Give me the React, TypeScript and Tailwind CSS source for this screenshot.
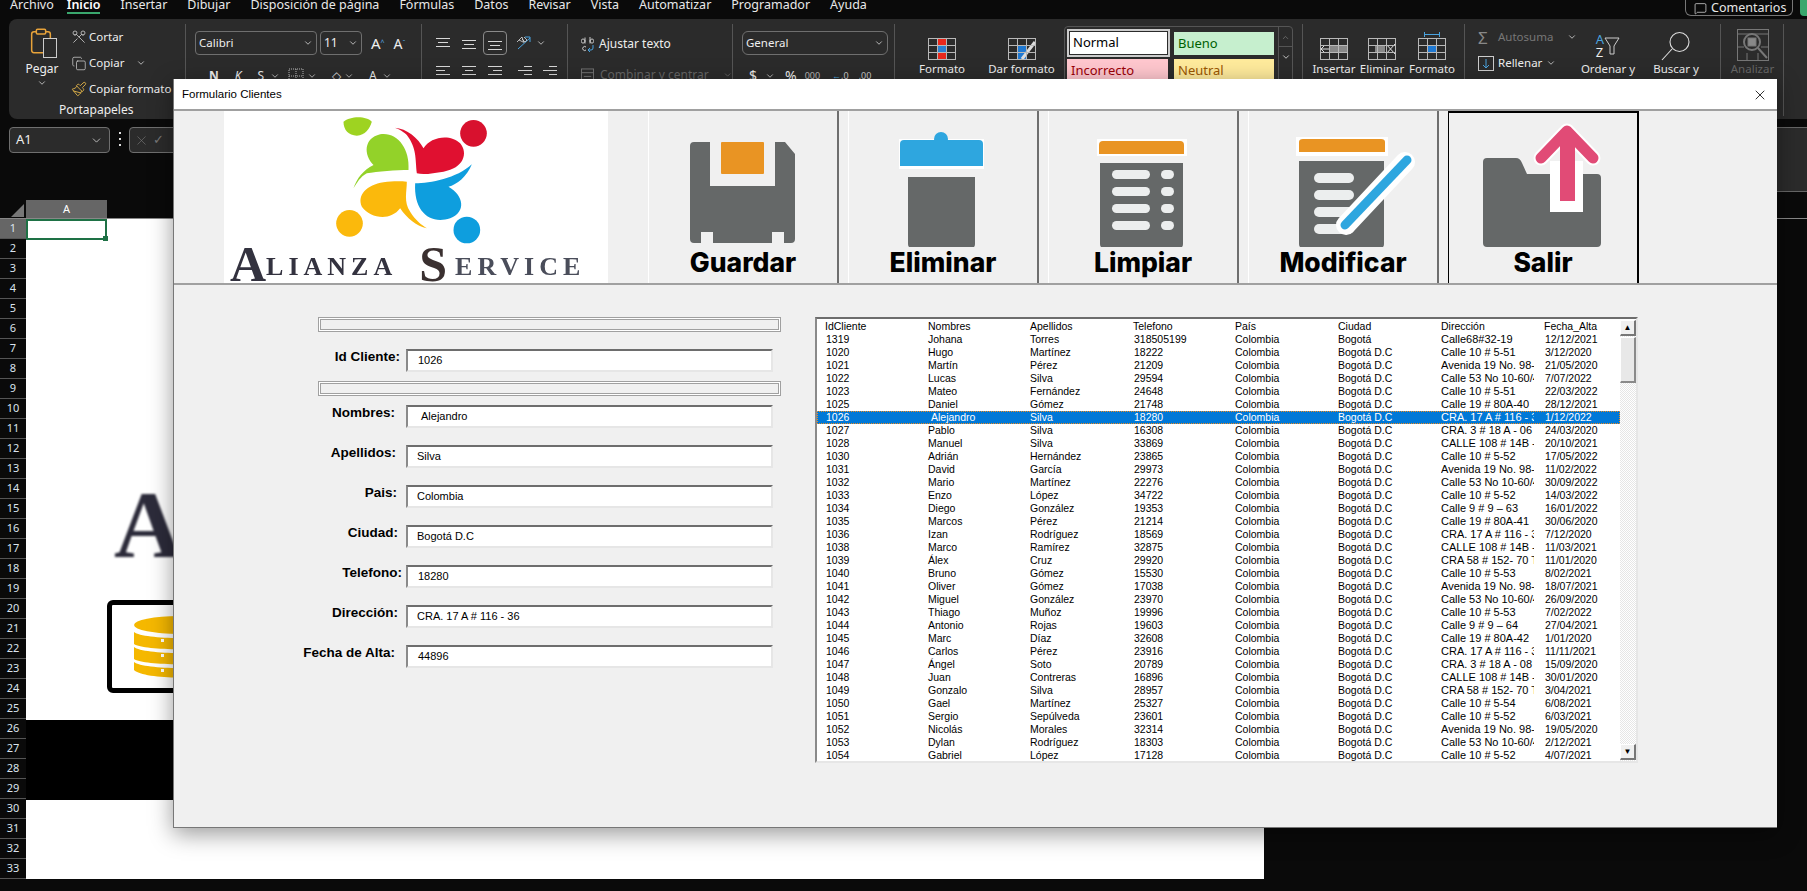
import { ChevronDown, Clipboard, Copy, MessageSquare, Paintbrush, Scissors, X } from 'lucide-react';

const menu = ['Archivo', 'Inicio', 'Insertar', 'Dibujar', 'Disposición de página', 'Fórmulas', 'Datos', 'Revisar', 'Vista', 'Automatizar', 'Programador', 'Ayuda'];

const addr = {
  a51: 'Calle 10 # 5-51',
  a52: 'Calle 10 # 5-52',
  a53: 'Calle 10 # 5-53',
  av: 'Avenida 19 No. 98-03',
  c53: 'Calle 53 No 10-60/46',
  cra17: 'CRA. 17 A # 116 - 36',
  c108: 'CALLE 108 # 14B - 10',
  cra58: 'CRA 58 # 152- 70 Torre',
};

const clients = [
  ['1319', 'Johana', 'Torres', '318505199', 'Bogotá', 'Calle68#32-19', '12/12/2021'],
  ['1020', 'Hugo', 'Martínez', '18222', 'Bogotá D.C', addr.a51, '3/12/2020'],
  ['1021', 'Martín', 'Pérez', '21209', 'Bogotá D.C', addr.av, '21/05/2020'],
  ['1022', 'Lucas', 'Silva', '29594', 'Bogotá D.C', addr.c53, '7/07/2022'],
  ['1023', 'Mateo', 'Fernández', '24648', 'Bogotá D.C', addr.a51, '22/03/2022'],
  ['1025', 'Daniel', 'Gómez', '21748', 'Bogotá D.C', 'Calle 19 # 80A-40', '28/12/2021'],
  ['1026', 'Alejandro', 'Silva', '18280', 'Bogotá D.C', addr.cra17, '1/12/2022'],
  ['1027', 'Pablo', 'Silva', '16308', 'Bogotá D.C', 'CRA. 3 # 18 A - 06', '24/03/2020'],
  ['1028', 'Manuel', 'Silva', '33869', 'Bogotá D.C', addr.c108, '20/10/2021'],
  ['1030', 'Adrián', 'Hernández', '23865', 'Bogotá D.C', addr.a52, '17/05/2022'],
  ['1031', 'David', 'García', '29973', 'Bogotá D.C', addr.av, '11/02/2022'],
  ['1032', 'Mario', 'Martínez', '22276', 'Bogotá D.C', addr.c53, '30/09/2022'],
  ['1033', 'Enzo', 'López', '34722', 'Bogotá D.C', addr.a52, '14/03/2022'],
  ['1034', 'Diego', 'González', '19353', 'Bogotá D.C', 'Calle 9 # 9 – 63', '16/01/2022'],
  ['1035', 'Marcos', 'Pérez', '21214', 'Bogotá D.C', 'Calle 19 # 80A-41', '30/06/2020'],
  ['1036', 'Izan', 'Rodríguez', '18569', 'Bogotá D.C', addr.cra17, '7/12/2020'],
  ['1038', 'Marco', 'Ramírez', '32875', 'Bogotá D.C', addr.c108, '11/03/2021'],
  ['1039', 'Álex', 'Cruz', '29920', 'Bogotá D.C', addr.cra58, '11/01/2020'],
  ['1040', 'Bruno', 'Gómez', '15530', 'Bogotá D.C', addr.a53, '8/02/2021'],
  ['1041', 'Oliver', 'Gómez', '17038', 'Bogotá D.C', addr.av, '18/07/2021'],
  ['1042', 'Miguel', 'González', '23970', 'Bogotá D.C', addr.c53, '26/09/2020'],
  ['1043', 'Thiago', 'Muñoz', '19996', 'Bogotá D.C', addr.a53, '7/02/2022'],
  ['1044', 'Antonio', 'Rojas', '19603', 'Bogotá D.C', 'Calle 9 # 9 – 64', '27/04/2021'],
  ['1045', 'Marc', 'Díaz', '32608', 'Bogotá D.C', 'Calle 19 # 80A-42', '1/01/2020'],
  ['1046', 'Carlos', 'Pérez', '23916', 'Bogotá D.C', addr.cra17, '11/11/2021'],
  ['1047', 'Ángel', 'Soto', '20789', 'Bogotá D.C', 'CRA. 3 # 18 A - 08', '15/09/2020'],
  ['1048', 'Juan', 'Contreras', '16896', 'Bogotá D.C', addr.c108, '30/01/2020'],
  ['1049', 'Gonzalo', 'Silva', '28957', 'Bogotá D.C', addr.cra58, '3/04/2021'],
  ['1050', 'Gael', 'Martínez', '25327', 'Bogotá D.C', 'Calle 10 # 5-54', '6/08/2021'],
  ['1051', 'Sergio', 'Sepúlveda', '23601', 'Bogotá D.C', addr.a52, '6/03/2021'],
  ['1052', 'Nicolás', 'Morales', '32314', 'Bogotá D.C', addr.av, '19/05/2020'],
  ['1053', 'Dylan', 'Rodríguez', '18303', 'Bogotá D.C', addr.c53, '2/12/2021'],
  ['1054', 'Gabriel', 'López', '17128', 'Bogotá D.C', addr.a52, '4/07/2021'],
];

const fields = [
  { label: 'Nombres:', value: 'Alejandro', labelPad: 'pr-[11px]', valuePad: 'pl-[13px]' },
  { label: 'Apellidos:', value: 'Silva', labelPad: 'pr-[10px]', valuePad: 'pl-[9px]' },
  { label: 'Pais:', value: 'Colombia', labelPad: 'pr-[9px]', valuePad: 'pl-[9px]' },
  { label: 'Ciudad:', value: 'Bogotá D.C', labelPad: 'pr-[8px]', valuePad: 'pl-[9px]' },
  { label: 'Telefono:', value: '18280', labelPad: 'pr-[4px]', valuePad: 'pl-[10px]' },
  { label: 'Dirección:', value: 'CRA. 17 A # 116 - 36', labelPad: 'pr-[8px]', valuePad: 'pl-[9px]' },
  { label: 'Fecha de Alta:', value: '44896', labelPad: 'pr-[11px]', valuePad: 'pl-[10px]' },
];

function Chev({ className = '' }: { className?: string }) {
  return <ChevronDown size={10} strokeWidth={2} className={`text-[#d0d0d0] ${className}`} />;
}

function Lines({ rows, dim = false }: { rows: [number, number, number][]; dim?: boolean }) {
  return (
    <svg width="16" height="14" viewBox="0 0 16 14" stroke={dim ? '#777' : '#d8d8d8'} strokeWidth="1">
      {rows.map(([x1, x2, y], i) => (
        <line key={i} x1={x1} x2={x2} y1={y + 0.5} y2={y + 0.5} />
      ))}
    </svg>
  );
}

function CellGrid({ children }: { children?: React.ReactNode }) {
  return (
    <svg width="30" height="24" viewBox="0 0 30 24" fill="none">
      {children}
      <g stroke="#b8b8b8" strokeWidth="1">
        <rect x="1.5" y="1.5" width="27" height="21" />
        <path d="M10.5 1.5v21M19.5 1.5v21M1.5 8.5h27M1.5 15.5h27" />
      </g>
    </svg>
  );
}

function BigTool({ icon, label, width, dim = false }: { icon: React.ReactNode; label: string; width: string; dim?: boolean }) {
  return (
    <div className={`flex flex-col items-center pt-[2px] ${width}`}>
      <div className="flex h-[35px] items-end justify-center">{icon}</div>
      <div className={`whitespace-nowrap text-[11.5px] leading-[16px] ${dim ? 'text-[#666]' : 'text-[#eee]'}`}>{label}</div>
    </div>
  );
}

function Ribbon() {
  return (
    <div className="ml-[9px] flex h-[100px] rounded-l-lg bg-[#2b2b2b] font-['Noto_Sans',sans-serif] text-[12px] text-[#eee]">
      {/* Portapapeles */}
      <div className="mt-[5px] mb-[3px] flex w-[177px] flex-col border-r border-[#555]">
        <div className="flex flex-1">
          <div className="flex w-[60px] flex-col items-center pl-[6px] pt-[3px]">
            <div className="relative h-[31px] w-[30px]">
              <Clipboard size={28} strokeWidth={1.3} className="text-[#e8a33a]" />
              <div className="absolute right-0 bottom-0 h-[20px] w-[14px] border border-[#ccc] bg-[#2b2b2b]" />
            </div>
            <div className="mt-[3px] leading-[16px]">Pegar</div>
            <Chev className="mt-[1px]" />
          </div>
          <div className="flex flex-col text-[11.5px] leading-[16px]">
            <div className="flex h-[26px] items-center">
              <Scissors size={16} strokeWidth={1.2} className="w-[20px] rotate-90 text-[#cfcfcf]" />
              Cortar
            </div>
            <div className="flex h-[26px] items-center">
              <Copy size={15} strokeWidth={1.2} className="w-[20px] text-[#cfcfcf]" />
              Copiar
              <Chev className="ml-[12px]" />
            </div>
            <div className="flex h-[26px] items-center whitespace-nowrap">
              <Paintbrush size={16} strokeWidth={1.3} className="w-[20px] text-[#e8b84a]" />
              Copiar formato
            </div>
          </div>
        </div>
        <div className="pb-[2px] pl-[50px] leading-[16px]">Portapapeles</div>
      </div>

      {/* Fuente */}
      <div className="mt-[5px] mb-[3px] w-[236px] border-r border-[#555] pl-[9px] pt-[7px]">
        <div className="flex items-center">
          <div className="flex h-[24px] w-[122px] items-center justify-between rounded border border-[#6f6f6f] px-[3px] text-[11.5px]">
            Calibri <Chev />
          </div>
          <div className="ml-[3px] flex h-[24px] w-[42px] items-center justify-between rounded border border-[#6f6f6f] px-[3px]">
            11 <Chev />
          </div>
          <span className="ml-[9px] text-[15px]">A<sup className="text-[7px] text-[#5ab0e8]">^</sup></span>
          <span className="ml-[9px] text-[14px]">A<sup className="text-[7px] text-[#5ab0e8]">ˇ</sup></span>
        </div>
        <div className="mt-[12px] flex items-center pl-[14px] font-bold">
          <span>N</span>
          <span className="ml-[16px] font-normal italic">K</span>
          <span className="ml-[16px] font-normal underline">S</span>
          <Chev className="ml-[6px]" />
          <svg width="16" height="16" className="ml-[8px]" viewBox="0 0 16 16" fill="none" stroke="#bbb" strokeDasharray="1 1"><rect x="1" y="1" width="14" height="14" /><path d="M8 1v14M1 8h14" /></svg>
          <Chev className="ml-[3px]" />
          <span className="ml-[15px] text-[#ddd] font-normal">◇</span>
          <Chev className="ml-[3px]" />
          <span className="ml-[15px] font-normal">A</span>
          <Chev className="ml-[5px]" />
        </div>
      </div>

      {/* Alineacion */}
      <div className="mt-[5px] mb-[3px] w-[146px] border-r border-[#555] pl-[13px] pt-[7px]">
        <div className="flex h-[24px] items-center">
          <div className="w-[26px]"><Lines rows={[[1, 15, 2], [3, 13, 6], [1, 15, 10]]} /></div>
          <div className="w-[22px]"><Lines rows={[[1, 15, 4], [3, 13, 8], [1, 15, 12]]} /></div>
          <div className="flex h-[24px] w-[24px] items-center justify-center rounded border border-[#8a8a8a]"><Lines rows={[[1, 15, 5], [3, 13, 9], [1, 15, 13]]} /></div>
          <div className="ml-[8px] flex items-center gap-[2px]">
            <svg width="18" height="18" viewBox="0 0 18 18" fill="none"><path d="M3 15 15 4M10 3h5v5" stroke="#4aa3df" /><path d="m2 8 5-5 2 6M4 6l4 2M9 3l3 3-2 2-3-3" stroke="#ddd" strokeWidth="0.8" /></svg>
            <Chev className="ml-[1px]" />
          </div>
        </div>
        <div className="mt-[9px] flex items-center">
          <div className="w-[26px]"><Lines rows={[[1, 15, 2], [1, 10, 6], [1, 15, 10]]} /></div>
          <div className="w-[26px]"><Lines rows={[[1, 15, 2], [4, 12, 6], [1, 15, 10]]} /></div>
          <div className="w-[30px]"><Lines rows={[[1, 15, 2], [6, 15, 6], [1, 15, 10]]} /></div>
          <div className="w-[25px]"><Lines rows={[[7, 15, 2], [1, 15, 6], [7, 15, 10]]} /></div>
          <div><Lines rows={[[7, 15, 2], [1, 15, 6], [7, 15, 10]]} /></div>
        </div>
      </div>

      {/* Ajustar texto */}
      <div className="mt-[5px] mb-[3px] w-[165px] border-r border-[#555] pl-[13px] pt-[10px]">
        <div className="flex h-[20px] items-center gap-[5px]">
          <svg width="13" height="16" viewBox="0 0 13 16" fill="none">
            <path d="M4 1.5v6M4 5a2 2 0 1 0 0 .1M9 1v6.5M9 5a2 2 0 1 1 0 .1M5 11a2 2 0 1 0 0 3" stroke="#ddd" strokeWidth="0.9" />
            <path d="M12 9v3a2 2 0 0 1-2 2H7m2-2-2 2 2 2" stroke="#4aa3df" />
          </svg>
          Ajustar texto
        </div>
        <div className="mt-[12px] flex items-center gap-[6px] whitespace-nowrap text-[#666]">
          <svg width="14" height="14" viewBox="0 0 14 14" fill="none" stroke="#777"><rect x="0.5" y="0.5" width="13" height="13" /><path d="M0.5 4.5h13M3 8.5h8" /></svg>
          Combinar y centrar
          <Chev className="ml-[8px] opacity-40" />
        </div>
      </div>

      {/* Numero */}
      <div className="mt-[5px] mb-[3px] w-[162px] border-r border-[#555] pl-[9px] pt-[7px]">
        <div className="flex h-[24px] w-[146px] items-center justify-between rounded-md border border-[#6f6f6f] px-[3px] text-[11.5px]">
          General <Chev />
        </div>
        <div className="mt-[10px] flex items-center pl-[7px] text-[11px]">
          <span className="text-[14px]">$</span>
          <Chev className="ml-[8px]" />
          <span className="ml-[10px] text-[14px]">%</span>
          <span className="ml-[8px] text-[9px] text-[#bbb]">000</span>
          <span className="ml-[12px] text-[9px] text-[#4aa3df]">←<span className="text-[#ccc]">,0</span></span>
          <span className="ml-[10px] text-[9px] text-[#ccc]">,00</span>
        </div>
      </div>

      {/* Estilos */}
      <div className="mt-[5px] mb-[3px] flex w-[408px] border-r border-[#555]">
        <BigTool
          width="w-[94px]"
          label="Formato"
          icon={
            <CellGrid>
              <rect x="10" y="1" width="10" height="7" fill="#e8281c" />
              <rect x="10" y="8" width="9" height="7" fill="#2a7fd0" />
              <rect x="10" y="15" width="10" height="8" fill="#e8281c" />
            </CellGrid>
          }
        />
        <BigTool
          width="w-[65px]"
          label="Dar formato"
          icon={
            <CellGrid>
              <rect x="10" y="8" width="10" height="14" fill="#1f78d1" />
              <path d="M28 5 15 22" stroke="#ddd" strokeWidth="3" />
            </CellGrid>
          }
        />
        <div className="ml-[10px] mt-[2px] flex h-[70px] w-[229px] rounded-t border border-[#555]">
          <div className="grid h-[58px] flex-1 grid-cols-[107px_100px] content-start gap-y-[2px] pl-[2px] pt-[2px] text-[13px]">
            <div className="flex h-[28px] w-[103px] items-center border-2 border-[#ccc] bg-white pl-[4px] text-black outline outline-[#2b2b2b] -outline-offset-[3px]">Normal</div>
            <div className="mt-[3px] flex h-[23px] items-center bg-[#c6efce] pl-[4px] text-[#006100]">Bueno</div>
            <div className="flex h-[23px] w-[101px] items-center bg-[#ffc7ce] pl-[4px] text-[#9c0006]">Incorrecto</div>
            <div className="flex h-[23px] items-center bg-[#ffeb9c] pl-[4px] text-[#9c5700]">Neutral</div>
          </div>
          <div className="flex w-[14px] flex-col items-center border-l border-[#555] pt-[6px]">
            <ChevronDown size={9} className="rotate-180 text-[#777]" />
            <div className="mt-[4px] h-px w-full bg-[#555]" />
            <ChevronDown size={10} className="mt-[5px] text-[#ddd]" />
          </div>
        </div>
      </div>

      {/* Celdas */}
      <div className="mt-[5px] mb-[3px] flex w-[162px] border-r border-[#555] pl-[7px]">
        <BigTool
          width="w-[48px]"
          label="Insertar"
          icon={
            <CellGrid>
              <rect x="10" y="8" width="18" height="8" fill="#888" />
              <path d="M10 12H2M5 9l-3 3 3 3" stroke="#ddd" />
            </CellGrid>
          }
        />
        <BigTool
          width="w-[48px]"
          label="Eliminar"
          icon={
            <CellGrid>
              <rect x="8" y="8" width="10" height="8" fill="#888" />
              <path d="m19 7 9 10m0-10-9 10" stroke="#ddd" />
            </CellGrid>
          }
        />
        <BigTool
          width="w-[52px]"
          label="Formato"
          icon={
            <div className="flex flex-col items-center">
              <svg width="30" height="5" viewBox="0 0 30 5" stroke="#4aa3df"><path d="M7 2.5h16M7.5 0v5M22.5 0v5" /></svg>
              <CellGrid>
                <rect x="10" y="8" width="10" height="8" fill="#1f78d1" />
              </CellGrid>
            </div>
          }
        />
      </div>

      {/* Edicion */}
      <div className="mt-[5px] mb-[3px] flex w-[256px] border-r border-[#555] pl-[13px] text-[11.5px]">
        <div className="flex w-[100px] flex-col pt-[1px]">
          <div className="flex h-[24px] items-center gap-[6px] text-[#777]">
            <span className="w-[14px] text-[17px] leading-none text-[#888]">Σ</span>
            Autosuma
            <Chev className="ml-[8px]" />
          </div>
          <div className="mt-[2px] flex h-[24px] items-center gap-[4px]">
            <svg width="16" height="16" viewBox="0 0 16 16" fill="none"><rect x="0.5" y="1.5" width="15" height="14" stroke="#ccc" /><path d="M8 4v9M5 10l3 3 3-3" stroke="#4aa3df" /></svg>
            Rellenar
            <Chev />
          </div>
        </div>
        <BigTool
          width="w-[60px]"
          label="Ordenar y"
          icon={
            <div className="flex h-[30px] items-center">
              <span className="text-[13px] leading-[13px]"><span className="text-[#4aa3df]">A</span><br />Z</span>
              <svg width="16" height="20" viewBox="0 0 16 20" fill="none" stroke="#ccc"><path d="M1 2h14L10 10v8H6v-8Z" /></svg>
            </div>
          }
        />
        <BigTool
          width="w-[76px]"
          label="Buscar y"
          icon={
            <svg width="30" height="30" viewBox="0 0 30 30" fill="none" stroke="#ddd" strokeWidth="1.1">
              <circle cx="18.5" cy="11" r="9.5" />
              <path d="M11 18 1 29" />
            </svg>
          }
        />
      </div>

      {/* Analizar */}
      <div className="mt-[5px] mb-[3px] w-[63px] border-r border-[#555]">
        <BigTool
          width="w-[63px]"
          label="Analizar"
          dim
          icon={
            <svg width="32" height="32" viewBox="0 0 32 32" fill="none" stroke="#777">
              <rect x="0.5" y="0.5" width="31" height="31" />
              <path d="M1 5h30M1 18h6M24 18h7M10 24v7M21 24v7" />
              <circle cx="15" cy="13" r="8" strokeWidth="2" />
              <path d="m21 19 9 10" strokeWidth="2" />
              <rect x="11" y="9" width="8" height="8" fill="#888" />
            </svg>
          }
        />
      </div>
    </div>
  );
}

function Sheet() {
  return (
    <div className="flex font-['Noto_Sans',sans-serif]">
      <div className="w-[26px]">
        {Array.from({ length: 33 }, (_, i) => (
          <div key={i} className={`flex h-[20px] items-center justify-center border-b border-[#555] text-[11px] text-[#dbe4ee] ${i === 0 ? 'bg-[#666]' : 'bg-[#0a0a0a]'}`}>
            {i + 1}
          </div>
        ))}
      </div>
      <div className="flex h-[660px] w-[1238px] flex-col bg-white">
        <div className="relative h-[21px] w-[81px] border-2 border-[#1e7145]">
          <div className="absolute -right-[3px] -bottom-[3px] h-[5px] w-[5px] bg-[#1e7145]" />
        </div>
        <div className="ml-[88px] mt-[250px] h-[70px] font-['Liberation_Serif',serif] text-[95px] leading-[70px] font-bold text-[#2c2b3a] blur-[1px]">A</div>
        <div className="ml-[81px] mt-[40px] flex h-[93px] w-[400px] items-center rounded-md border-[5px] border-black pl-[22px]">
          <svg width="90" height="62" viewBox="0 0 90 62" fill="#f5b800">
            <ellipse cx="45" cy="9" rx="45" ry="9" />
            <path d="M0 16C10 24 80 24 90 16V28C80 35 10 35 0 28Z" />
            <path d="M0 31C10 39 80 39 90 31V43C80 50 10 50 0 43Z" />
            <path d="M0 46C10 54 80 54 90 46V54C80 64 10 64 0 54Z" />
            <rect x="27" y="23" width="3" height="3" fill="#fff" />
            <rect x="27" y="38" width="3" height="3" fill="#fff" />
            <rect x="27" y="53" width="3" height="3" fill="#fff" />
          </svg>
        </div>
        <div className="mt-[27px] h-[80px] bg-black" />
      </div>
    </div>
  );
}

function LogoArt() {
  return (
    <div className="flex h-[172px] w-[384px] flex-col items-center bg-white">
      <svg width="384" height="138" viewBox="42 18 1151 414" className="blur-[0.7px]">
        <path d="M400 50C420 32 470 32 485 50 478 72 465 90 440 92 415 90 400 75 400 50Z" fill="#9ed321" />
        <path d="M595 195C560 195 500 200 470 205 450 215 440 235 430 250 440 220 460 195 490 180 460 150 460 100 510 88 560 80 600 130 595 195Z" fill="#93d229" />
        <circle cx="790" cy="85" r="40" fill="#d8112e" />
        <path d="M620 205C615 160 620 130 590 90 575 75 560 70 553 68 590 70 625 100 640 130 660 95 720 85 750 115 775 145 760 190 700 200 670 205 640 210 620 205Z" fill="#e01030" />
        <path d="M590 230C590 260 580 290 600 320 615 345 635 360 650 370 620 365 590 340 570 310 540 350 480 340 455 305 440 270 470 240 520 232 545 228 570 228 590 230Z" fill="#fbb90c" />
        <circle cx="418" cy="355" r="40" fill="#fbb90c" />
        <path d="M615 235C660 235 740 220 785 178 770 215 740 240 715 245 760 270 770 320 720 340 660 360 610 320 615 235Z" fill="#0e9ede" />
        <circle cx="770" cy="375" r="40" fill="#0e9ede" />
      </svg>
      <div className="flex h-[34px] w-[384px] items-end pl-[6px] font-['Liberation_Serif',serif] font-bold whitespace-nowrap text-[#33323f] blur-[0.6px]">
        <span className="text-[50px] leading-[38px]">A</span>
        <span className="text-[26px] leading-[32px] tracking-[5px]">LIANZA</span>
        <span className="ml-[22px] text-[50px] leading-[38px] text-[#3a3030]">S</span>
        <span className="ml-[8px] text-[26px] leading-[32px] tracking-[5px] text-[#4a4d5a]">ERVICE</span>
      </div>
    </div>
  );
}

const toolButtons = [
  {
    label: 'Guardar',
    icon: (
      <>
        <path d="M46 31H62V75H127V31H137L147 43V128Q147 132 143 132H136V121H124V132H65V121H53V132H46Q42 132 42 128V35Q42 31 46 31Z" fill="#656868" />
        <rect x="73" y="31" width="43" height="32" rx="1" fill="#e99423" />
      </>
    ),
  },
  {
    label: 'Eliminar',
    icon: (
      <>
        <rect x="51" y="28" width="85" height="30" fill="#fff" />
        <circle cx="93" cy="28" r="7" fill="#2ea6df" />
        <path d="M52 55V33Q52 29 56 29H131Q135 29 135 33V55Z" fill="#2ea6df" />
        <path d="M60 66H127V133Q127 137 123 137H64Q60 137 60 133Z" fill="#656868" />
      </>
    ),
  },
  {
    label: 'Limpiar',
    icon: (
      <>
        <rect x="49" y="28" width="90" height="17" fill="#fff" />
        <path d="M51 43V34Q51 30 55 30H132Q136 30 136 34V43Z" fill="#e99423" />
        <path d="M52 52H135V133Q135 137 131 137H56Q52 137 52 133Z" fill="#656868" />
        {[59, 76, 93, 110].map((y) => (
          <g key={y} fill="#eceeee">
            <rect x="64" y={y} width="38" height="9" rx="4.5" />
            <rect x="113" y={y} width="13" height="9" rx="4.5" />
          </g>
        ))}
      </>
    ),
  },
  {
    label: 'Modificar',
    icon: (
      <>
        <rect x="48" y="26" width="92" height="19" fill="#fff" />
        <path d="M51 41V31Q51 28 55 28H133Q137 28 137 31V41Z" fill="#e99423" />
        <path d="M51 50H136V133Q136 137 132 137H55Q51 137 51 133Z" fill="#656868" />
        {[62, 79, 96, 113].map((y) => (
          <rect key={y} x="66" y={y} width="40" height="10" rx="5" fill="#eceeee" />
        ))}
        <path d="M157 51 98 114" stroke="#fff" strokeWidth="20" strokeLinecap="round" />
        <path d="M159 49 97 114" stroke="#2ea6df" strokeWidth="9" strokeLinecap="round" />
      </>
    ),
  },
  {
    label: 'Salir',
    icon: (
      <>
        <path d="M39 47H68Q72 47 74 52L79 63H149Q153 63 153 67V132Q153 136 149 136H39Q35 136 35 132V51Q35 47 39 47Z" fill="#656868" />
        <rect x="102" y="50" width="33" height="51" fill="#fff" />
        <path d="M93 47 119 20 145 47" fill="none" stroke="#fff" strokeWidth="15" strokeLinecap="round" strokeLinejoin="round" />
        <path d="M93 47 119 20 145 47" fill="none" stroke="#e14b76" strokeWidth="11" strokeLinecap="round" strokeLinejoin="round" />
        <rect x="112" y="24" width="15" height="66" fill="#e14b76" />
      </>
    ),
  },
];

function Toolbar() {
  return (
    <div className="flex h-[174px] border-b-2 border-[#a0a0a0] pl-[50px]">
      <LogoArt />
      <div className="ml-[40px] flex gap-[9px]">
        {toolButtons.map((b) => (
          <div
            key={b.label}
            className={`flex w-[191px] flex-col items-center border-r-2 ${b.label === 'Salir' ? 'border-t-2 border-l border-black' : 'border-l border-[#ffffff] border-r-[#6e6e6e]'}`}
          >
            <svg width="190" height="136" viewBox="0 0 190 136" className={b.label === 'Salir' ? '-mt-[2px]' : ''}>
              {b.icon}
            </svg>
            <div className="font-['Inter',sans-serif] text-[26.5px] leading-[30px] font-extrabold text-black">{b.label}</div>
          </div>
        ))}
      </div>
    </div>
  );
}

function Frame() {
  return (
    <div className="ml-[16px] h-[15px] w-[463px] border border-[#a0a0a0] bg-white p-px">
      <div className="h-full border border-[#a0a0a0] bg-[#f0f0f0]" />
    </div>
  );
}

function Field({ label, value, labelPad, valuePad }: { label: string; value: string; labelPad: string; valuePad: string }) {
  return (
    <div className="flex h-[23px]">
      <div className={`w-[104px] text-right text-[13.5px] leading-[16px] font-bold text-black ${labelPad}`}>{label}</div>
      <div className={`flex w-[367px] items-center border-t-2 border-r-2 border-b-2 border-l-2 border-t-[#6d6d6d] border-r-[#e6e6e6] border-b-[#e6e6e6] border-l-[#8a8a8a] bg-white text-[11px] text-black ${valuePad}`}>
        {value}
      </div>
    </div>
  );
}

function Form() {
  return (
    <div className="flex w-[479px] flex-col">
      <Frame />
      <div className="mt-[17px]">
        <Field label="Id Cliente:" value="1026" labelPad="pr-[6px]" valuePad="pl-[10px]" />
      </div>
      <div className="mt-[9px]">
        <Frame />
      </div>
      <div className="mt-[9px] flex flex-col gap-[17px]">
        {fields.map((f) => (
          <Field key={f.label} {...f} />
        ))}
      </div>
    </div>
  );
}

function ScrollButton({ glyph }: { glyph: string }) {
  return (
    <div className="flex h-[16px] items-center justify-center border-t border-r-2 border-b-2 border-l border-t-white border-r-[#777] border-b-[#777] border-l-white bg-[#f0f0f0] text-[8px] text-black">
      {glyph}
    </div>
  );
}

function ClientList() {
  return (
    <div className="flex h-[446px] w-[823px] border-t-2 border-r-2 border-b-2 border-l-2 border-t-[#6d6d6d] border-r-[#e6e6e6] border-b-[#e6e6e6] border-l-[#8a8a8a] bg-white pt-px text-[10.5px] leading-[13px] text-black">
      <div className="w-[803px] overflow-hidden">
        <div className="grid grid-cols-[103px_102px_103px_102px_103px_103px_103px_70px] pl-[8px]">
          {['IdCliente', 'Nombres', 'Apellidos', 'Telefono', 'País', 'Ciudad', 'Dirección', 'Fecha_Alta'].map((h) => (
            <div key={h}>{h}</div>
          ))}
        </div>
        {clients.map((c) => {
          const selected = c[0] === '1026';
          return (
            <div
              key={c[0]}
              className={`grid h-[13px] grid-cols-[103px_102px_103px_102px_103px_103px_103px_70px] pl-[8px] whitespace-nowrap ${selected ? 'bg-[#0078d7] text-white outline-1 -outline-offset-1 outline-dotted outline-[#f08c1e]' : ''}`}
            >
              <div className="pl-px">{c[0]}</div>
              <div className={selected ? 'pl-[3px]' : ''}>{c[1]}</div>
              <div>{c[2]}</div>
              <div className="pl-px">{c[3]}</div>
              <div>Colombia</div>
              <div>{c[4]}</div>
              <div className="w-[93px] overflow-hidden text-[11px]">{c[5]}</div>
              <div className="pl-px">{c[6]}</div>
            </div>
          );
        })}
      </div>
      <div className="flex w-[16px] flex-col justify-between bg-[repeating-conic-gradient(#ffffff_0_25%,#e6e6e6_0_50%)] bg-[length:2px_2px]">
        <div>
          <ScrollButton glyph="▲" />
          <div className="mt-px h-[46px] border-t border-r-2 border-b-2 border-l border-t-white border-r-[#8a8a8a] border-b-[#8a8a8a] border-l-white bg-[#e8e8e8]" />
        </div>
        <div className="mb-[1px]">
          <ScrollButton glyph="▼" />
        </div>
      </div>
    </div>
  );
}

function ClientsDialog() {
  return (
    <div className="absolute top-[79px] left-[173px] flex h-[749px] w-[1604px] flex-col border-b border-l border-[#777] bg-[#f0f0f0] font-['Liberation_Sans',sans-serif] shadow-[0_6px_22px_rgba(0,0,0,0.4)]">
      <div className="flex h-[32px] items-center justify-between border-b-2 border-[#a0a0a0] bg-white pr-[9px] pl-[8px] pt-[1px] text-[11.5px] text-black">
        Formulario Clientes
        <X size={16} strokeWidth={1.2} />
      </div>
      <Toolbar />
      <div className="flex pt-[32px] pl-[128px]">
        <Form />
        <div className="ml-[34px]">
          <ClientList />
        </div>
      </div>
    </div>
  );
}

export default function App() {
  return (
    <div className="relative h-[891px] w-[1807px] overflow-hidden bg-[#0a0a0a]">
      <div className="flex h-[19px] items-start justify-between font-['Noto_Sans',sans-serif] text-[12.5px] text-[#e8e8e8]">
        <div className="-mt-[5px] flex gap-[20px] pl-[10px]">
          {menu.map((m) => (
            <div key={m} className={`leading-[19px] whitespace-nowrap ${m === 'Inicio' ? '-ml-[7px] font-semibold text-white' : ''}`}>
              {m}
              {m === 'Inicio' && <div className="-mt-[2px] h-[2px] bg-[#3aa76d]" />}
            </div>
          ))}
        </div>
        <div className="flex items-start gap-[7px]">
          <div className="flex h-[16px] w-[108px] items-end gap-[4px] rounded-b-md border-x border-b border-[#777] pl-[8px] leading-[14px]">
            <MessageSquare size={13} strokeWidth={1.3} />
            Comentarios
          </div>
          <div className="h-[16px] w-[7px] rounded-bl bg-[#3aa76d]" />
        </div>
      </div>
      <Ribbon />
      <div className="mt-[8px] flex h-[73px] items-start font-['Noto_Sans',sans-serif] text-[#eee]">
        <div className="ml-[9px] flex h-[26px] w-[101px] items-center justify-between rounded border border-[#6f6f6f] bg-[#2b2b2b] px-[6px] text-[13px]">
          A1 <ChevronDown size={13} strokeWidth={1.3} />
        </div>
        <div className="ml-[9px] mt-[5px] flex h-[14px] flex-col justify-between">
          <div className="h-[2px] w-[2px] bg-[#ddd]" />
          <div className="h-[2px] w-[2px] bg-[#ddd]" />
          <div className="h-[2px] w-[2px] bg-[#ddd]" />
        </div>
        <div className="ml-[8px] flex h-[26px] w-[60px] items-center gap-[4px] rounded border border-[#6f6f6f] bg-[#2b2b2b] pl-[4px] text-[#777]">
          <X size={15} strokeWidth={1} />
          <span className="text-[13px]">✓</span>
        </div>
        <div className="h-[65px] flex-1 border-y border-[#666] bg-[#2b2b2b]" />
      </div>
      <div className="flex h-[19px] border-b border-[#888]">
        <div className="flex w-[26px] items-end justify-end pr-[2px] pb-[1px]">
          <div className="h-0 w-0 border-b-[13px] border-l-[13px] border-b-[#777] border-l-transparent" />
        </div>
        <div className="flex w-[81px] items-center justify-center bg-[#666] font-['Noto_Sans',sans-serif] text-[11px] text-white">A</div>
      </div>
      <Sheet />
      <ClientsDialog />
    </div>
  );
}
